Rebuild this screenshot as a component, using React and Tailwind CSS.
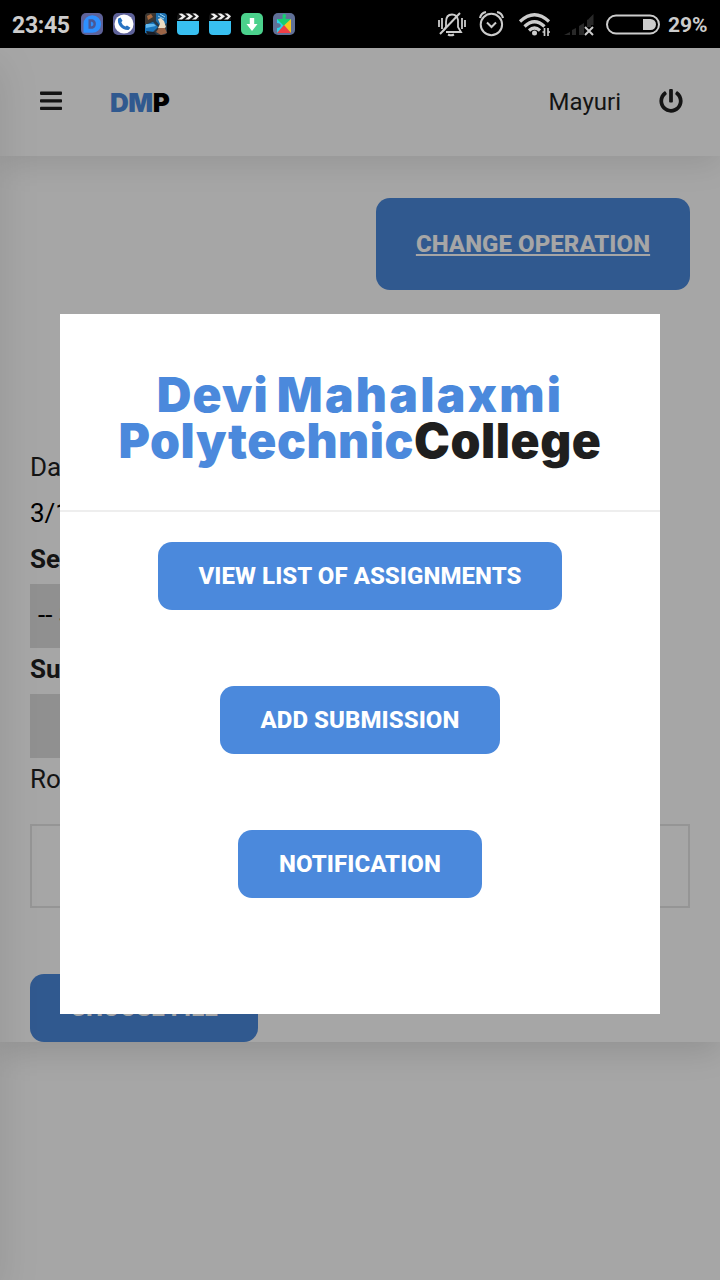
import React from "react";
import { FaPowerOff } from "react-icons/fa";

function StatusBar() {
  return (
    <div className="flex h-12 w-full shrink-0 items-center bg-black text-[#cccccc]">
      <span className="ml-3 mt-0.5 w-[69px] text-[23px] font-bold leading-none tracking-[-0.3px]">23:45</span>
      <svg className="-mt-px h-[22px] w-[214px]" viewBox="0 0 214 22">
        <rect width="22" height="22" rx="5" fill="#5e6299" />
        <path d="M2.500 19V11A8.800 8.800 0 1 1 11 19.800H2.500Z" fill="#2d8fff" />
        <path d="M8.700 7.500H11.200A3.700 3.700 0 0 1 11.200 14.500H8.700Z" fill="none" stroke="#4b5795" strokeWidth="2.400" />
        <rect x="32" width="22" height="22" rx="5" fill="#5e6299" />
        <circle cx="43" cy="11" r="9.500" fill="#fff" />
        <path d="M37.200 5.500C35.500 11 41 17.500 47.500 17L49.500 14.800L46 12.400L44.300 13.600Q41.300 12.200 40.300 9.300L41.500 7.800L39.500 4.500Z" fill="#2873c2" />
        <g>
          <rect x="64" width="22" height="22" rx="4" fill="#263847" />
          <path d="M64 4Q64 0 68 0H75L73 7L64 12Z" fill="#3c3630" />
          <path d="M66 3L70 1L72 4L67 7Z" fill="#a76a40" />
          <path d="M75 0H82Q86 0 86 4V10L80 14L75 8Z" fill="#1d6fae" />
          <path d="M64 12L72 9L77 14L72 19L64 20Z" fill="#1976bd" />
          <path d="M65 11L73 11L75 13L65 15Z" fill="#62b8ee" />
          <path d="M77 6L80 5L83 8L85 14L81 17L77 15L79 11Z" fill="#ecdcc2" />
          <path d="M78 15L84 15L86 20L80 22L75 19Z" fill="#9b6547" />
          <path d="M77 3L83 6M79 1L84 4" stroke="#9ed4f2" strokeWidth="1" fill="none" />
          <path d="M65 18L73 19L76 22H67Z" fill="#191c24" />
        </g>
        {[96, 128].map((x) => (
          <g key={x} transform={"translate(" + x + " 0)"}>
            <path d="M0 8H22V18Q22 22 18 22H4Q0 22 0 18Z" fill="#38bff0" />
            <path d="M3 0H19Q22 1 22 4V7H0V4Q0 1 3 0Z" fill="#151515" />
            <path d="M1.500 0.800L5 0.500L9 3.300L5 6.500H1L5 3.500ZM8.500 0.500H12L16 3.300L12 6.500H8L12 3.500ZM15.500 0.500H18.500L22 3.300L19 6.500H15L19 3.500Z" fill="#f0f0f0" />
          </g>
        ))}
        <rect x="160" width="22" height="22" rx="5" fill="#4bd18c" />
        <path d="M168.800 5H173.200V11H176.500L171 18L165.500 11H168.800Z" fill="#fff" />
        <rect x="192" width="22" height="22" rx="5" fill="#607097" />
        <path d="M196 6H210V20H196V15C201 15 201 10 196 10Z" fill="#29d4ec" />
        <path d="M196 6H201C203 5 201 4 201.500 2.500C202 0 206 1 205 3.500C204 5 204 6 206 6H210L203 13Z" fill="#17ce70" />
        <path d="M210 6V20L203 12.500Z" fill="#f5c51d" />
        <path d="M196 20L203 12L210 20Z" fill="#ef3d46" />
      </svg>
      <svg className="ml-auto mr-2 h-7 w-[224px]" viewBox="436 10 224 28" fill="none" stroke="currentColor">
        <g strokeWidth="1.800">
          <path d="M443 31L446 27V22Q446 14.500 452 14.500Q457 14.500 458 20V27L461 32H446M439 20V27M442 18V29M462 18V29M465 20V27" />
          <path d="M440 34L460 13" strokeWidth="2" />
          <path d="M448 34.500Q451 36 454 34.500" strokeWidth="2" />
        </g>
        <circle cx="491.400" cy="24.500" r="10.700" strokeWidth="2" />
        <path d="M487 22.500L491.500 27L496 22.500" strokeWidth="2" />
        <path d="M480 18Q481 13 486 12M497 12Q502 13 503 18" strokeWidth="2.200" />
        <path d="M520 21.500Q534.500 8 549 21.500M524.500 26.500Q534.500 17 544.500 26.500M529 30.500Q534.500 25.500 540 30.500" strokeWidth="3.200" />
        <circle cx="534.500" cy="33" r="2.500" fill="currentColor" stroke="none" />
        <path d="M544.500 28V36M548 28V36M542.500 32H544M548 32H550" strokeWidth="1.700" />
        <g fill="#292929" stroke="none">
          <path d="M564 35L570 32V35ZM572 30L576 28V35H572ZM579 26L584 23V35H579ZM587 20L591 18V27H587ZM588.500 19L593.500 14V25H588.500Z" />
        </g>
        <path d="M585 27L593 35M593 27L585 35" strokeWidth="2" />
        <rect x="607" y="15.500" width="52" height="18" rx="9" strokeWidth="2" />
        <path d="M643 19H650.500A5.500 5.500 0 0 1 650.500 30H643Z" fill="currentColor" stroke="none" />
      </svg>
      <span className="mr-3 mt-0.5 w-10 text-[21px] font-bold leading-none">29%</span>
    </div>
  );
}

function Header() {
  return (
    <header className="flex h-[108px] shrink-0 items-center bg-white pl-10 pr-[37px] shadow-[0_8px_30px_rgba(0,0,0,0.1)]">
      <svg className="-mt-1 h-5 w-[22px]" viewBox="0 0 22 20" fill="#1f1f1f">
        <rect y="1.600" width="22" height="3.300" rx="0.800" />
        <rect y="9.200" width="22" height="3.300" rx="0.800" />
        <rect y="16.700" width="22" height="3.300" rx="0.800" />
      </svg>
      <span className="ml-12 mt-0.5 font-['Inter',sans-serif] text-[26px] font-black leading-none tracking-[-0.5px] text-black">
        <span className="text-[#4b89dc]">DM</span>P
      </span>
      <span className="ml-auto mr-[38px] text-2xl leading-none">Mayuri</span>
      <FaPowerOff className="-mt-0.5 size-6" />
    </header>
  );
}

function ActionButton({ children, className = "" }) {
  return (
    <button className={"flex h-[68px] items-center justify-center whitespace-nowrap rounded-[14px] bg-[#4b89dc] text-2xl font-extrabold tracking-[0.06px] text-white " + className}>
      {children}
    </button>
  );
}

function AssignmentForm() {
  return (
    <main className="flex h-[886px] shrink-0 flex-col bg-white px-[30px] pt-[42px] shadow-[0_10px_30px_rgba(0,0,0,0.12)]">
      <ActionButton className="h-[92px] w-[314px] shrink-0 self-end underline decoration-2 underline-offset-[2px]">CHANGE OPERATION</ActionButton>
      <div className="mt-[154px] flex flex-col text-[26px] leading-[46px]">
        <label>Date</label>
        <span className="text-black">3/1</span>
        <label className="font-bold">Select Subject</label>
        <div className="mt-0.5 h-16 w-[400px] bg-[#dddddd] pl-2 leading-[62px] text-black">-- Select --</div>
        <label className="font-bold leading-[42px]">Subject</label>
        <div className="mt-1 h-16 w-[400px] bg-[#dddddd]" />
        <label className="leading-[42px]">Roll No</label>
        <div className="mt-6 h-[84px] border-2 border-[#e5e5e5]" />
      </div>
      <ActionButton className="mt-[66px] w-[228px] shrink-0">CHOOSE FILE</ActionButton>
    </main>
  );
}

function OperationDialog() {
  return (
    <section role="dialog" className="flex h-[700px] w-[600px] flex-col bg-white">
      <h1 className="flex h-[198px] flex-col items-center border-b-2 border-[#eeeeee] pt-[58px] font-['Inter',sans-serif] text-[48px] font-black leading-[46px] text-[#4b89dc]">
        <span className="whitespace-nowrap tracking-[1.2px] [word-spacing:-3px]">Devi <span className="tracking-[2.3px]">Mahalaxmi</span></span>
        <span className="whitespace-nowrap tracking-[0.55px]">Polytechnic<span className="text-[#1f1f1f]">College</span></span>
      </h1>
      <div className="flex flex-col items-center gap-[76px] pt-[30px]">
        <ActionButton className="w-[404px]">VIEW LIST OF ASSIGNMENTS</ActionButton>
        <ActionButton className="w-[280px]">ADD SUBMISSION</ActionButton>
        <ActionButton className="w-[244px]">NOTIFICATION</ActionButton>
      </div>
    </section>
  );
}

export default function App() {
  return (
    <div className="flex h-[1280px] w-[720px] flex-col overflow-hidden font-['Roboto',sans-serif] text-[#1f1f1f]">
      <StatusBar />
      <div className="relative flex h-[1232px] flex-col overflow-hidden bg-white">
        <div className="relative z-10 flex flex-col"><Header /></div>
        <AssignmentForm />
        <div className="absolute top-0 right-full z-20 h-[1232px] w-[280px] shadow-[0_16px_40px_rgba(0,0,0,0.1)]" />
        <div className="absolute inset-0 z-30 flex items-start justify-center bg-black/35 pt-[266px]">
          <OperationDialog />
        </div>
      </div>
    </div>
  );
}
